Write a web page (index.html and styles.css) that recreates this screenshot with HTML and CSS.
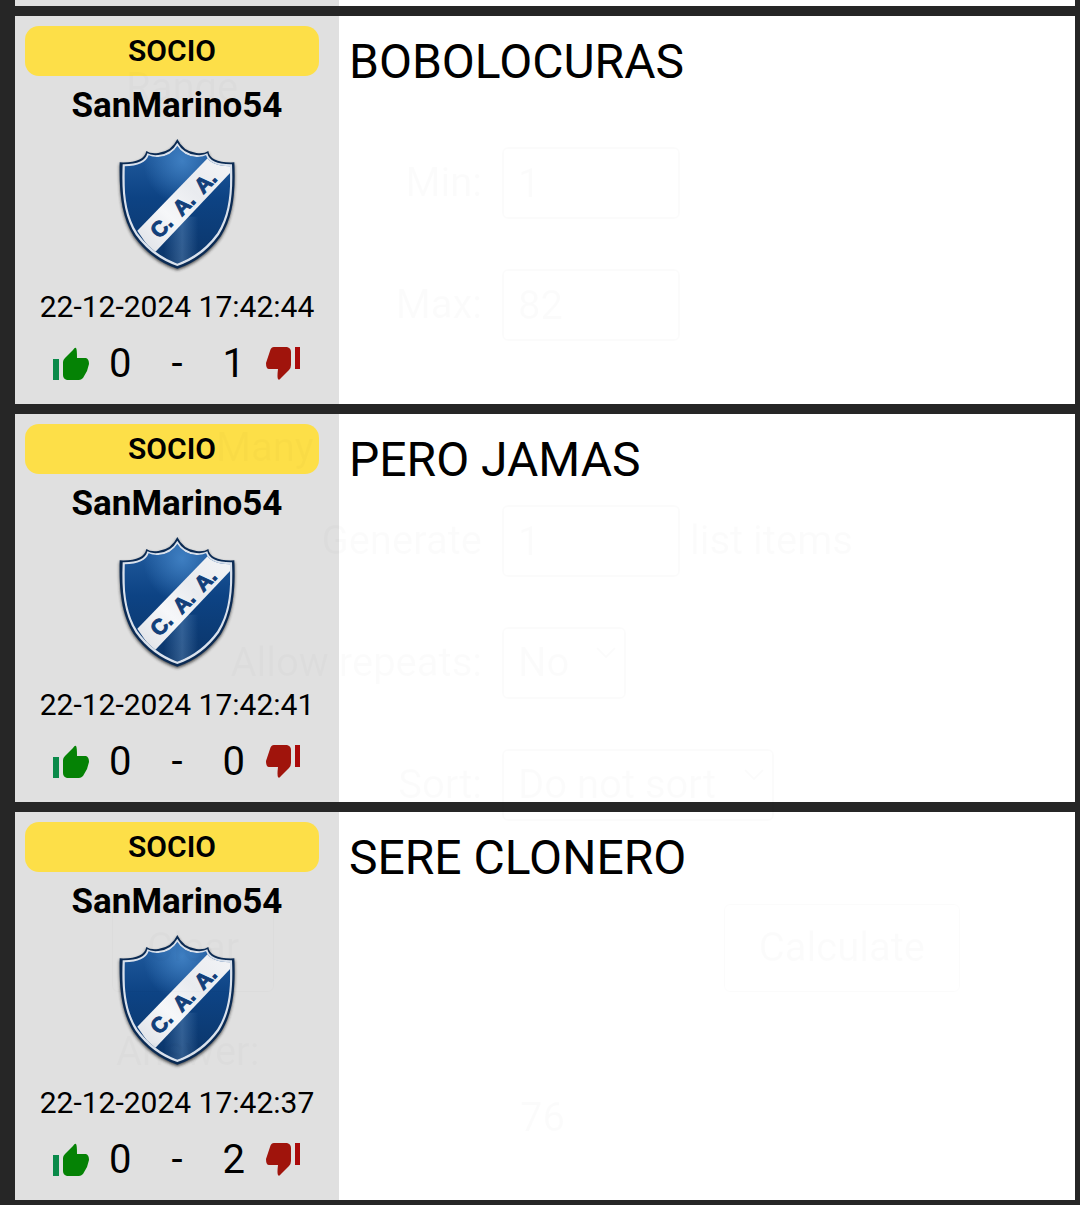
FILE: index.html
```html
<!DOCTYPE html>
<html lang="es">
<head>
<meta charset="utf-8">
<meta name="viewport" content="width=device-width, initial-scale=1">
<title>Foro</title>
<link rel="stylesheet" href="styles.css">
</head>
<body>
<svg class="defs" aria-hidden="true">
  <defs>
    <linearGradient id="blue" x1="0" y1="0" x2="0" y2="1">
      <stop offset="0" stop-color="#245fa3"/><stop offset=".45" stop-color="#0d4384"/><stop offset="1" stop-color="#0b3467"/>
    </linearGradient>
    <radialGradient id="shine" cx=".54" cy=".16" r=".34">
      <stop offset="0" stop-color="#4283c6" stop-opacity=".9"/><stop offset="1" stop-color="#4283c6" stop-opacity="0"/>
    </radialGradient>
    <linearGradient id="gleam" x1="0" y1="0" x2="1" y2="0">
      <stop offset=".38" stop-color="#7aa5d2" stop-opacity="0"/><stop offset=".54" stop-color="#7aa5d2" stop-opacity=".35"/><stop offset=".68" stop-color="#7aa5d2" stop-opacity="0"/>
    </linearGradient>
    <linearGradient id="band" x1="0" y1="1" x2="1" y2="0">
      <stop offset="0" stop-color="#dcdfe5"/><stop offset=".35" stop-color="#f6f7f9"/><stop offset=".6" stop-color="#e9ebef"/><stop offset="1" stop-color="#f4f5f7"/>
    </linearGradient>
    <filter id="shadow" x="-10%" y="-10%" width="120%" height="120%"><feGaussianBlur stdDeviation="5"/></filter>
    <path id="outline" d="M232 27Q249 64 289 69Q313 72 325 63Q330 100 403 97C407 190 399 260 363 318Q311 390 232 416Q153 390 101 318C65 260 57 190 59 97Q132 100 139 63Q151 72 175 69Q215 64 232 27Z"/>
    <clipPath id="inside"><path d="M232 48Q250 78 289 81Q307 82 318 76Q329 108 390 109C393 190 386 255 352 309Q305 374 232 401Q159 374 112 309C78 255 71 190 74 109Q135 108 146 76Q157 82 175 81Q214 78 232 48Z"/></clipPath>
    <symbol id="crest" viewBox="6 0 450 450">
      <use href="#outline" fill="#222" opacity=".75" filter="url(#shadow)" transform="translate(0 5)"/>
      <use href="#outline" fill="#0b2b54"/>
      <path d="M232 38Q250 71 289 75Q311 77 322 70Q330 104 396 103C400 190 392 258 357 314Q308 382 232 408Q156 382 107 314C72 258 64 190 68 103Q134 104 142 70Q153 77 175 75Q214 71 232 38Z" fill="#d9e1ec"/>
      <g clip-path="url(#inside)">
        <rect x="60" y="30" width="345" height="385" fill="url(#blue)"/>
        <rect x="60" y="30" width="345" height="385" fill="url(#shine)"/>
        <rect x="60" y="260" width="345" height="150" fill="url(#gleam)"/>
        <path d="M112 302L335 72L410 108L160 372Z" fill="url(#band)"/>
      </g>
      <g class="crest-letters" fill="#123f7a">
        <text transform="translate(184 290) rotate(-46)" dy="22">C.</text>
        <text transform="translate(252 223) rotate(-46)" dy="22">A.</text>
        <text transform="translate(316 156) rotate(-46)" dy="22">A.</text>
      </g>
    </symbol>
    <symbol id="up" viewBox="0 0 36 34">
      <path fill="#0a8a4a" d="M0 12h6v21H0z"/>
      <path fill="#058205" d="M10 15Q10 13 12 11L20 3Q22 0 23 1Q24 2 24 11H33Q36 12 36 17L34 24L30 31Q28 33 26 33H14Q10 32 10 28Z"/>
    </symbol>
    <symbol id="down" viewBox="0 0 36 34">
      <path fill="#ab0a0a" d="M30 0h5v22h-5z"/>
      <path fill="#a0140c" d="M9 0H22Q26 1 26 5V18Q26 21 24 23L16 31Q14 34 13 32Q12 30 13 22H4Q1 22 1 16L5 4Q6 0 9 0Z"/>
    </symbol>
  </defs>
</svg>
<main class="feed">
  <div class="post previous"><div class="author"></div></div>
  <article class="post">
    <div class="author">
      <span class="badge">SOCIO</span>
      <strong class="name">SanMarino54</strong>
      <svg class="crest" role="img" aria-label="Escudo"><use href="#crest"/></svg>
      <time class="date">22-12-2024 17:42:44</time>
      <div class="votes">
        <button class="vote" aria-label="Me gusta"><svg class="thumb"><use href="#up"/></svg></button>
        <span>0</span><span class="dash">-</span><span>1</span>
        <button class="vote" aria-label="No me gusta"><svg class="thumb"><use href="#down"/></svg></button>
      </div>
    </div>
    <p class="message">BOBOLOCURAS</p>
  </article>
  <article class="post">
    <div class="author">
      <span class="badge">SOCIO</span>
      <strong class="name">SanMarino54</strong>
      <svg class="crest" role="img" aria-label="Escudo"><use href="#crest"/></svg>
      <time class="date">22-12-2024 17:42:41</time>
      <div class="votes">
        <button class="vote" aria-label="Me gusta"><svg class="thumb"><use href="#up"/></svg></button>
        <span>0</span><span class="dash">-</span><span>0</span>
        <button class="vote" aria-label="No me gusta"><svg class="thumb"><use href="#down"/></svg></button>
      </div>
    </div>
    <p class="message">PERO JAMAS</p>
  </article>
  <article class="post">
    <div class="author">
      <span class="badge">SOCIO</span>
      <strong class="name">SanMarino54</strong>
      <svg class="crest" role="img" aria-label="Escudo"><use href="#crest"/></svg>
      <time class="date">22-12-2024 17:42:37</time>
      <div class="votes">
        <button class="vote" aria-label="Me gusta"><svg class="thumb"><use href="#up"/></svg></button>
        <span>0</span><span class="dash">-</span><span>2</span>
        <button class="vote" aria-label="No me gusta"><svg class="thumb"><use href="#down"/></svg></button>
      </div>
    </div>
    <p class="message">SERE CLONERO</p>
  </article>
</main>
<form class="ghost" inert>
  <h2 class="range">Range</h2>
  <div class="line"><label for="min">Min:</label><input id="min" value="1"></div>
  <div class="line"><label for="max">Max:</label><input id="max" value="82"></div>
  <h2 class="many">Many</h2>
  <div class="line"><label for="count">Generate</label><input id="count" value="1"><span>list items</span></div>
  <div class="line"><label for="repeats">Allow repeats:</label><span class="pick"><select id="repeats" class="short"><option>No</option></select><svg class="chevron" viewBox="0 0 20 12"><path d="M1 1l9 9 9-9" fill="none" stroke="#000" stroke-width="2"/></svg></span></div>
  <div class="line"><label for="sort">Sort:</label><span class="pick"><select id="sort" class="long"><option>Do not sort</option></select><svg class="chevron" viewBox="0 0 20 12"><path d="M1 1l9 9 9-9" fill="none" stroke="#000" stroke-width="2"/></svg></span></div>
  <div class="actions"><button type="button">Clear</button><button type="button">Calculate</button></div>
  <h2 class="answer">Answer:</h2>
  <output class="result">76</output>
</form>
</body>
</html>
```
FILE: styles.css
```css
* { box-sizing: border-box; }
body {
  margin: 0;
  position: relative;
  background: #262626;
  color: #000;
  font-family: Roboto, "Liberation Sans", sans-serif;
}
.defs { position: absolute; width: 0; height: 0; }
.feed {
  display: flex;
  flex-direction: column;
  gap: 10px;
  padding: 0 5px 5px 15px;
}
.post {
  display: grid;
  grid-template-columns: 324px 1fr;
  background: #fff;
}
.previous { height: 6px; }
.previous .author { padding: 0; }
.author {
  display: flex;
  flex-direction: column;
  align-items: center;
  padding: 10px 0 20px;
  background: #e0e0e0;
}
.badge {
  align-self: stretch;
  margin: 0 20px 10px 10px;
  border-radius: 14px;
  background: #fddf48;
  text-align: center;
  font-size: 30px;
  font-weight: 600;
  line-height: 50px;
}
.name { font-size: 35px; line-height: 40px; }
.crest { width: 150px; height: 150px; margin: 4px 0 9px; }
.crest-letters {
  font-family: "Liberation Sans", Arial, sans-serif;
  font-size: 64px;
  font-weight: 700;
  text-anchor: middle;
  stroke: #123f7a;
  stroke-width: 3px;
}
.date { font-size: 30px; line-height: 36px; }
.votes {
  display: flex;
  align-items: center;
  gap: 20px;
  margin-top: 19px;
  font-size: 40px;
  line-height: 40px;
}
.dash { padding: 0 20px; }
.vote { display: flex; padding: 0; border: 0; background: none; }
.thumb { width: 36px; height: 34px; }
.message { margin: 0; padding: 18px 10px; font-size: 48px; line-height: 56px; }

/* Faded calculator layer */
.ghost {
  position: absolute;
  inset: 0;
  display: flex;
  flex-direction: column;
  padding-top: 64px;
  opacity: .012;
  font-size: 40px;
  line-height: 48px;
  pointer-events: none;
  overflow: hidden;
}
.ghost h2 { margin: 0; font-size: 40px; font-weight: 400; }
.ghost input, .ghost select, .ghost button {
  height: 72px;
  padding: 0 14px;
  border: 2px solid #000;
  border-radius: 6px;
  background: none;
  color: #000;
  font: inherit;
  appearance: none;
}
.ghost input { width: 178px; }
.ghost .short { width: 124px; }
.ghost .long { width: 272px; }
.pick { position: relative; }
.chevron { position: absolute; right: 10px; top: 20px; width: 20px; height: 12px; }
.line { display: flex; align-items: center; gap: 10px; height: 122px; }
.line label { width: 482px; margin-right: 10px; text-align: right; }
.range { padding: 0 0 10px 126px; }
.many { padding: 58px 0 8px 216px; }
.actions { display: flex; justify-content: space-between; padding: 58px 120px 36px 112px; }
.ghost .actions button { height: 88px; padding: 0 34px; border-width: 1px; }
.answer { padding: 0 0 18px 116px; }
.result { padding-left: 520px; }
```
